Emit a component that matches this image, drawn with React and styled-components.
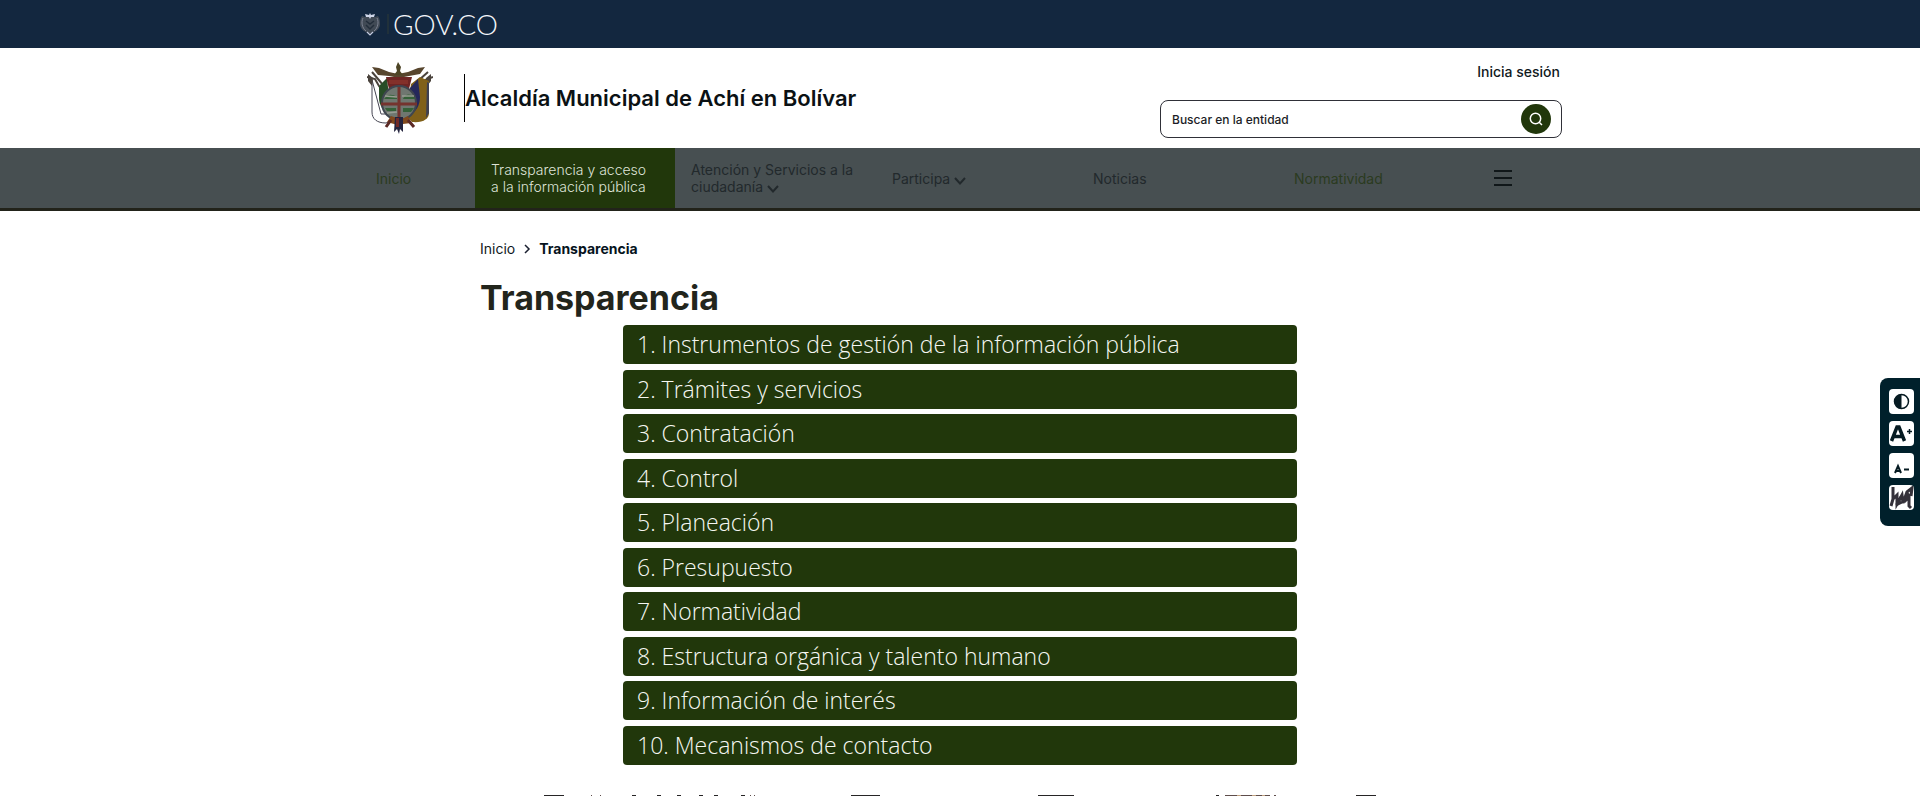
import React from "react";
import styled, { createGlobalStyle } from "styled-components";

const green = "#21370b";
const ink = "#10191c";

const GlobalStyle = createGlobalStyle`
  *, *::before, *::after { box-sizing: border-box; }
  body { margin: 0; background: #fff; color: ${ink}; font-family: Inter, "Open Sans", sans-serif; font-size: 14px; overflow-x: hidden; }
  a { color: inherit; text-decoration: none; }
  button, input { font: inherit; color: inherit; }
  ul, ol { list-style: none; margin: 0; padding: 0; }
  svg { display: block; }
`;

const Container = styled.div`
  width: 100%;
  max-width: 1204px;
  margin: 0 auto;
`;

const GovBar = styled.div`
  background: #13273f;
`;

const GovLink = styled.a`
  display: inline-flex;
  align-items: center;
  height: 48px;
  padding-left: 2px;
  color: #f4f6fa;
  font: 300 28px/48px Lato, sans-serif;
`;

const GovDivider = styled.span`
  width: 2px;
  height: 20px;
  margin: 0 4px 0 7px;
  background: #20303a;
`;

const HeaderRow = styled(Container)`
  display: flex;
  justify-content: space-between;
  height: 100px;
`;

const Brand = styled.a`
  display: flex;
  align-items: center;
  gap: 31px;
  padding-left: 9px;
`;

const EntityName = styled.span`
  border-left: 1px solid #000;
  color: #0b1114;
  font-size: 22px;
  font-weight: 600;
  line-height: 48px;
`;

const HeaderTools = styled.div`
  display: flex;
  flex-direction: column;
  align-items: flex-end;
  justify-content: space-between;
  width: 402px;
  padding: 12px 0 10px;
`;

const LoginLink = styled.a`
  padding-right: 2px;
  font-weight: 500;
  line-height: 24px;
`;

const SearchBox = styled.form`
  display: flex;
  align-items: center;
  width: 100%;
  height: 38px;
  padding: 0 10px 0 11px;
  border: 1px solid #2f3038;
  border-radius: 8px;
`;

const SearchInput = styled.input`
  flex: 1;
  min-width: 0;
  padding: 0;
  border: 0;
  outline: 0;
  background: transparent;
  font-size: 12px;
  font-weight: 500;
  &::placeholder { color: #1c1d26; opacity: 1; }
`;

const SearchButton = styled.button`
  display: grid;
  place-items: center;
  width: 30px;
  height: 30px;
  padding: 0;
  border: 0;
  border-radius: 50%;
  background: ${green};
  color: #fff;
`;

const NavBar = styled.nav`
  background: #474f51;
  border-bottom: 3px solid #22231a;
`;

const NavList = styled.ul`
  display: grid;
  grid-template-columns: 115px 200px repeat(3, 201px) 200px 1fr;
  width: 100%;
  max-width: 1200px;
  height: 60px;
  margin: 0 auto;
`;

const tones = { dark: "#22292c", olive: "#2b3b20", active: "#dfe3d8" };

const NavLink = styled.a`
  display: flex;
  align-items: center;
  height: 100%;
  padding: 0 16px;
  background: ${(p) => (p.$tone === "active" ? green : "transparent")};
  color: ${(p) => tones[p.$tone]};
  font-weight: ${(p) => (p.$tone === "active" ? 300 : 400)};
  line-height: 17px;
  white-space: nowrap;
  svg { display: inline-block; vertical-align: -3px; margin-left: 4px; }
`;

const NavLine = styled.span`
  display: block;
`;

const MenuButton = styled.button`
  display: grid;
  align-items: center;
  height: 100%;
  padding: 0 16px;
  border: 0;
  background: transparent;
`;

const Main = styled.main`
  width: 100%;
  max-width: 960px;
  margin: 0 auto;
  padding-top: 26px;
`;

const Breadcrumb = styled.ol`
  display: flex;
  align-items: center;
  gap: 8px;
  line-height: 24px;
`;

const Current = styled.strong`
  font-weight: 700;
  color: #06131d;
`;

const Title = styled.h1`
  margin: 16px 0 7px;
  color: #22251c;
  font-size: 34px;
  font-weight: 700;
  line-height: 41px;
`;

const TopicList = styled.ul`
  display: flex;
  flex-direction: column;
  justify-content: space-between;
  height: 440px;
  max-width: 674px;
  margin: 0 auto;
`;

const TopicButton = styled.button`
  display: block;
  width: 100%;
  height: 39px;
  padding: 0 14px;
  border: 0;
  border-radius: 4px;
  background: ${green};
  color: #f6f7f2;
  font: 300 23px/39px "Open Sans", sans-serif;
  text-align: left;
`;

const FooterArt = styled.svg`
  margin: 30px auto 0;
`;

const AccessBar = styled.aside`
  position: fixed;
  top: 378px;
  right: 0;
  display: flex;
  flex-direction: column;
  gap: 7px;
  width: 40px;
  height: 148px;
  padding: 11px 6px 0 9px;
  border-radius: 8px 0 0 8px;
  background: #00202b;
`;

const AccessButton = styled.button`
  width: 25px;
  height: 25px;
  padding: 0;
  border: 0;
  border-radius: 4px;
  background: #fff;
  color: #061b22;
  overflow: hidden;
`;

const Chevron = () => (
  <svg width="12" height="12" viewBox="0 0 12 12" fill="none" stroke="currentColor" strokeWidth="2" aria-hidden="true">
    <path d="M1 3 6 8.500l5-5.500" />
  </svg>
);

const NationalEmblem = () => (
  <svg width="20" height="24" viewBox="0 0 20 24" aria-hidden="true">
    <path d="M2 4C0 7 0 10 0 13c1 5 5 7 10 9 5-2 9-4 10-9 0-3 0-6-2-9l-3 1-5-2-5 2z" fill="#414a55" />
    <path d="M5 2l4 1 1-2 1 2 4-1-1 3h-3l-1 2-1-2H6z" fill="#cfd6e8" />
    <path d="M3 6c-2 4-1 10 3 13M17 6c2 4 1 10-3 13" fill="none" stroke="#7d8393" strokeWidth="1" />
    <path d="M6 9l4 3 4-3M6 13l4 4 4-4" fill="none" stroke="#232e3b" strokeWidth="1.5" />
    <path d="M7 20l3 3 3-3" fill="none" stroke="#c4cbe0" strokeWidth="1.2" />
  </svg>
);

const Crest = () => (
  <svg width="66" height="72" viewBox="0 0 66 72" role="img" aria-label="Escudo de Achí">
    <path d="M5 18v32c0 7 5 11 14 11l8-3-4-6H14z" fill="#fff" stroke="#454552" />
    <path d="M0 15l8 2 4 7 10 13M5 10l6 7 11 13M61 10l-9 8-8 10M66 15l-8 3-5 8" fill="none" stroke="#4a433c" strokeWidth="2" />
    <path d="M1 12l5 4-1 8-4-5zM64 12l-5 4 1 8 4-5z" fill="#4a433c" />
    <path d="M12 24l8-8 4 36c-8-2-12-9-12-16z" fill="#284d27" />
    <path d="M44 22l9-7 9 4v32c0 6-6 10-17 9l-5-5z" fill="#806019" />
    <path d="M43 26l8-9 2 18c0 8-4 15-10 18z" fill="#25285b" />
    <path d="M60 20l2 1v30l-3 5z" fill="#3e4052" />
    <path d="M5 5l7 1 10 4 9 2 10-2 10-4 7-1-5 7-11 2-10 2-10-2-11-1z" fill="#57452d" />
    <path d="M31 0l3 5-1 4 3 4h-9l3-4-1-4z" fill="#4d4425" />
    <path d="M19 15h26l-3 12H22z" fill="#6e2524" />
    <path d="M22 18h19v4H22z" fill="#83302a" />
    <circle cx="32" cy="41" r="17" fill="#6f7770" stroke="#3f4650" strokeWidth="2" />
    <path d="M18 36c3-4 7-4 12-1v2H17zM36 37c2-5 7-6 11-2l1 2H36zM18 46h11v3H20zM36 46h11l-3 4h-8z" fill="#346138" />
    <path d="M18 34l12 1M35 34h12M20 51l10-1" stroke="#989d93" strokeWidth="1.5" />
    <path d="M14 42h36M32 25v33" stroke="#75332e" strokeWidth="3" />
    <path d="M20 60l4-6 6 2 3 2 8-4 3 7-8 1-4 2-5-2z" fill="#80481d" />
    <path d="M28 55h8v15l-3-3-1 5-2-5-3 3z" fill="#24243e" />
    <path d="M29 56h3v9h-3z" fill="#712826" />
    <path d="M24 58l-5 7M41 58l6 7" stroke="#5b2925" strokeWidth="3" />
  </svg>
);

const nav = [
  { tone: "olive", lines: ["Inicio"] },
  { tone: "active", lines: ["Transparencia y acceso", "a la información pública"] },
  { tone: "dark", lines: ["Atención y Servicios a la", "ciudadanía"], menu: true },
  { tone: "dark", lines: ["Participa"], menu: true },
  { tone: "dark", lines: ["Noticias"] },
  { tone: "olive", lines: ["Normatividad"] },
];

const topics = [
  "Instrumentos de gestión de la información pública",
  "Trámites y servicios",
  "Contratación",
  "Control",
  "Planeación",
  "Presupuesto",
  "Normatividad",
  "Estructura orgánica y talento humano",
  "Información de interés",
  "Mecanismos de contacto",
];

export default function App() {
  return (
    <>
      <GlobalStyle />
      <GovBar>
        <Container>
          <GovLink href="#gov">
            <NationalEmblem />
            <GovDivider />
            <span>GOV.CO</span>
          </GovLink>
        </Container>
      </GovBar>
      <header>
        <HeaderRow>
          <Brand href="#inicio">
            <Crest />
            <EntityName>Alcaldía Municipal de Achí en Bolívar</EntityName>
          </Brand>
          <HeaderTools>
            <LoginLink href="#sesion">Inicia sesión</LoginLink>
            <SearchBox role="search">
              <SearchInput type="text" placeholder="Buscar en la entidad" aria-label="Buscar en la entidad" />
              <SearchButton type="button" aria-label="Buscar">
                <svg width="14" height="14" viewBox="0 0 14 14" fill="none" stroke="currentColor" strokeWidth="1.5">
                  <circle cx="6.5" cy="6.5" r="5.2" />
                  <path d="M10.2 10.2 13 13" />
                </svg>
              </SearchButton>
            </SearchBox>
          </HeaderTools>
        </HeaderRow>
      </header>
      <NavBar aria-label="Principal">
        <NavList>
          {nav.map(({ tone, lines, menu }) => (
            <li key={lines[0]}>
              <NavLink href="#seccion" $tone={tone}>
                <span>
                  {lines.map((line, i) => (
                    <NavLine key={line}>
                      {line}
                      {menu && i === lines.length - 1 && <Chevron />}
                    </NavLine>
                  ))}
                </span>
              </NavLink>
            </li>
          ))}
          <li>
            <MenuButton type="button" aria-label="Más opciones">
              <svg width="18" height="16" viewBox="0 0 18 16" stroke="#101719" strokeWidth="2">
                <path d="M0 1h18M0 8h18M0 15h18" />
              </svg>
            </MenuButton>
          </li>
        </NavList>
      </NavBar>
      <Main>
        <nav aria-label="Ruta">
          <Breadcrumb>
            <li><a href="#inicio">Inicio</a></li>
            <li aria-hidden="true">
              <svg width="8" height="10" viewBox="0 0 8 10" fill="none" stroke="#1b2030" strokeWidth="1.5">
                <path d="M2 1l4 4-4 4" />
              </svg>
            </li>
            <li><Current aria-current="page">Transparencia</Current></li>
          </Breadcrumb>
        </nav>
        <Title>Transparencia</Title>
        <TopicList>
          {topics.map((topic, i) => (
            <li key={topic}>
              <TopicButton type="button">{`${i + 1}. ${topic}`}</TopicButton>
            </li>
          ))}
        </TopicList>
        <FooterArt width="832" height="1" viewBox="0 0 832 1" shapeRendering="crispEdges" aria-hidden="true">
          <path d="M0 0h20v1H0zM88 0h4v1h-4zM113 0h4v1h-4zM133 0h4v1h-4zM155 0h4v1h-4zM170 0h4v1h-4zM197 0h4v1h-4zM307 0h29v1h-29zM494 0h36v1h-36zM672 0h3v1h-3zM812 0h20v1h-20z" fill="#272526" />
          <path d="M47 0h1v1h-1zM56 0h1v1h-1zM206 0h1v1h-1zM210 0h1v1h-1zM681 0h12v1h-12zM697 0h11v1h-11zM712 0h6v1h-6zM721 0h5v1h-5zM730 0h2v1h-2z" fill="#5e4d4b" />
          <path d="M693 0h4v1h-4zM708 0h4v1h-4zM718 0h3v1h-3z" fill="#c0a281" />
        </FooterArt>
      </Main>
      <AccessBar aria-label="Accesibilidad">
        <AccessButton type="button" aria-label="Contraste">
          <svg width="25" height="25" viewBox="0 0 25 25">
            <circle cx="12.5" cy="12.5" r="7" fill="none" stroke="currentColor" strokeWidth="1.5" />
            <path d="M12.5 5.5a7 7 0 0 0 0 14z" fill="currentColor" />
          </svg>
        </AccessButton>
        <AccessButton type="button" aria-label="Aumentar letra">
          <svg width="25" height="25" viewBox="0 0 25 25" fill="none" stroke="currentColor">
            <path d="M2.500 20 8 6h2l5.500 14M5 15.500h8" strokeWidth="3.5" />
            <path d="M18 10.500h5M20.500 8v5" strokeWidth="1.5" />
          </svg>
        </AccessButton>
        <AccessButton type="button" aria-label="Reducir letra">
          <svg width="25" height="25" viewBox="0 0 25 25">
            <path d="M6 20 9 13l3 7M7 18h4M15 16.500h5" fill="none" stroke="currentColor" strokeWidth="2" />
          </svg>
        </AccessButton>
        <AccessButton type="button" aria-label="Centro de relevo">
          <svg width="25" height="25" viewBox="0 0 25 25" fill="none" stroke="#34313a">
            <path d="M4 2v12l-2 7M4 14l4-4v9l5-9 1 8 4-11 5-4-1 8" strokeWidth="3" />
            <path d="M7 20l6-3M9 17l3-5M15 17l3-3 1-6M20 9v12l2 2" strokeWidth="3" />
          </svg>
        </AccessButton>
      </AccessBar>
    </>
  );
}
